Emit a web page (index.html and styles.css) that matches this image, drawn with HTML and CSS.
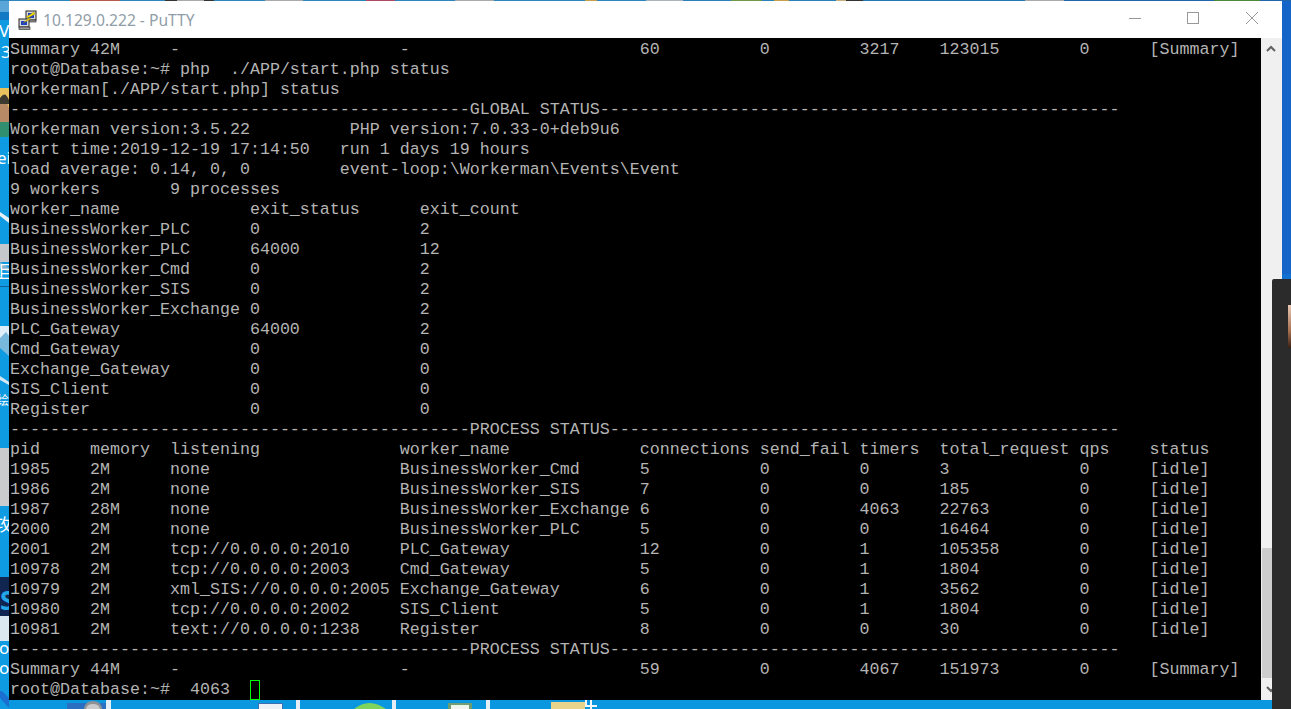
FILE: index.html
```html
<!DOCTYPE html>
<html lang="en">
<head>
<meta charset="utf-8">
<title>10.129.0.222 - PuTTY</title>
<link rel="stylesheet" href="styles.css">
</head>
<body>
<div class="desktop">
  <svg class="wallpaper" width="1291" height="709" viewBox="0 0 1291 709">
    <rect x="0" y="0" width="9" height="709" fill="#0f9be2"/>
    <rect x="0" y="0" width="9" height="12" fill="#5aa6d8"/>
    <rect x="0" y="12" width="9" height="8" fill="#1279c4"/>
    <text x="-1" y="37" class="frag">Vi</text>
    <text x="1" y="58" class="frag">3</text>
    <rect x="0" y="88" width="9" height="42" fill="#e8c25e"/>
    <path d="M0 112 Q4 108 9 118 V137 H0Z" fill="#2f8f6f"/>
    <path d="M0 100 Q6 98 9 108 V122 H0Z" fill="#b98a66"/>
    <path d="M0 98 Q5 90 9 100 V104 H0Z" fill="#3c3a30"/>
    <text x="-3" y="164" class="frag">ei</text>
    <path d="M0 212 L9 218 V223 L0 216Z" fill="#e6f2fa"/>
    <rect x="0" y="244" width="9" height="18" fill="#c4c8cc"/>
    <path d="M0 262 L9 268 V272 L0 268Z" fill="#7fb0d0"/>
    <text x="-3" y="278" class="frag">且</text>
    <rect x="0" y="286" width="9" height="1" fill="#0d5e9a"/>
    <path d="M0 326 H9 V356 L0 348Z" fill="#78b8dc"/>
    <path d="M0 338 L6 332 L9 336 V326 H0Z" fill="#dfeef8"/>
    <path d="M0 376 L9 382 V385 L0 380Z" fill="#d7e8f3"/>
    <text x="-3" y="405" class="frag small">绘</text>
    <rect x="0" y="448" width="9" height="58" fill="#c9cbcc"/>
    <text x="-5" y="531" class="frag">攻</text>
    <rect x="0" y="577" width="9" height="39" fill="#10254f"/>
    <text x="0" y="610" class="frag cyan">S</text>
    <rect x="0" y="616" width="9" height="25" fill="#dce8f0"/>
    <text x="-1" y="654" class="frag">o</text>
    <text x="-1" y="674" class="frag">o</text>
    <path d="M0 691 L2 691 L20 709 H10 L0 698Z" fill="#1a6fd0"/>

    <rect x="9" y="700" width="1263" height="9" fill="#0b97e0"/>
    <path d="M67 703 H110 V709 H67Z" fill="#2a6fc0"/>
    <path d="M84 709 Q85 701 93 701 Q101 701 102 709Z" fill="#8f9294"/>
    <path d="M86 709 Q87 704 93 704 Q99 704 100 709Z" fill="#c9cbcd"/>
    <rect x="106" y="700" width="5" height="9" fill="#e6eef5"/>
    <path d="M258 703 H283 V709 H258Z" fill="#3d6fb0"/>
    <rect x="259" y="704" width="23" height="5" fill="#eef2f6"/>
    <rect x="296" y="700" width="4" height="9" fill="#e6eef5"/>
    <path d="M354 709 Q369 697 386 709Z" fill="#7ed45c"/>
    <rect x="392" y="700" width="4" height="9" fill="#e6eef5"/>
    <rect x="448" y="703" width="24" height="6" fill="#6f9d70"/>
    <rect x="451" y="705" width="18" height="4" fill="#eef5ee"/>
    <rect x="486" y="700" width="4" height="9" fill="#e6eef5"/>
    <rect x="551" y="702" width="34" height="7" fill="#e9d48c"/>
    <path d="M586 700 V706 H597 M591 700 V709" stroke="#f4f8fb" stroke-width="2" fill="none"/>

    <rect x="1282" y="0" width="9" height="279" fill="#1565c8"/>
    <rect x="1282" y="274" width="9" height="5" fill="#1270d0"/>
  </svg>
  <div class="topedge"></div>

  <section class="window">
    <header class="titlebar">
      <svg class="appicon" width="20" height="20" viewBox="0 0 20 20">
        <rect x="8" y="1" width="10" height="9" fill="#d8d8d8" stroke="#222"/>
        <rect x="10" y="3" width="6" height="5" fill="#2040c0"/>
        <rect x="9" y="10" width="9" height="2" fill="#999" stroke="#222" stroke-width=".6"/>
        <rect x="1" y="9" width="10" height="8" fill="#d8d8d8" stroke="#222"/>
        <rect x="3" y="11" width="6" height="4" fill="#2040c0"/>
        <rect x="1" y="17" width="11" height="2.4" fill="#999" stroke="#222" stroke-width=".6"/>
        <path d="M16 2 L8 7 L11 8 L5 13 L13 9 L10 8 L17 4Z" fill="#f6e000" stroke="#8a7a00" stroke-width=".4"/>
      </svg>
      <h1 class="title">10.129.0.222 - PuTTY</h1>
      <div class="controls">
        <span class="ctl"><svg width="14" height="14" viewBox="0 0 14 14"><path d="M1 7.5 H13" stroke="#999" fill="none"/></svg></span>
        <span class="ctl"><svg width="14" height="14" viewBox="0 0 14 14"><rect x="1.5" y="1.5" width="11" height="11" stroke="#999" fill="none"/></svg></span>
        <span class="ctl"><svg width="14" height="14" viewBox="0 0 14 14"><path d="M1 1 L13 13 M13 1 L1 13" stroke="#999" fill="none"/></svg></span>
      </div>
    </header>
    <div class="client">
<pre class="term">Summary 42M     -                      -                       60          0         3217    123015        0      [Summary]
root@Database:~# php  ./APP/start.php status
Workerman[./APP/start.php] status
----------------------------------------------GLOBAL STATUS----------------------------------------------------
Workerman version:3.5.22          PHP version:7.0.33-0+deb9u6
start time:2019-12-19 17:14:50   run 1 days 19 hours
load average: 0.14, 0, 0         event-loop:\Workerman\Events\Event
9 workers       9 processes
worker_name             exit_status      exit_count
BusinessWorker_PLC      0                2
BusinessWorker_PLC      64000            12
BusinessWorker_Cmd      0                2
BusinessWorker_SIS      0                2
BusinessWorker_Exchange 0                2
PLC_Gateway             64000            2
Cmd_Gateway             0                0
Exchange_Gateway        0                0
SIS_Client              0                0
Register                0                0
----------------------------------------------PROCESS STATUS---------------------------------------------------
pid     memory  listening              worker_name             connections send_fail timers  total_request qps    status
1985    2M      none                   BusinessWorker_Cmd      5           0         0       3             0      [idle]
1986    2M      none                   BusinessWorker_SIS      7           0         0       185           0      [idle]
1987    28M     none                   BusinessWorker_Exchange 6           0         4063    22763         0      [idle]
2000    2M      none                   BusinessWorker_PLC      5           0         0       16464         0      [idle]
2001    2M      tcp://0.0.0.0:2010     PLC_Gateway             12          0         1       105358        0      [idle]
10978   2M      tcp://0.0.0.0:2003     Cmd_Gateway             5           0         1       1804          0      [idle]
10979   2M      xml_SIS://0.0.0.0:2005 Exchange_Gateway        6           0         1       3562          0      [idle]
10980   2M      tcp://0.0.0.0:2002     SIS_Client              5           0         1       1804          0      [idle]
10981   2M      text://0.0.0.0:1238    Register                8           0         0       30            0      [idle]
----------------------------------------------PROCESS STATUS---------------------------------------------------
Summary 44M     -                      -                       59          0         4067    151973        0      [Summary]
root@Database:~#  4063  <span class="cursor"> </span></pre>
      <div class="scrollbar">
        <svg class="arrow" width="10" height="8" viewBox="0 0 10 8"><path d="M1 6 L5 2 L9 6" stroke="#606060" stroke-width="2" fill="none"/></svg>
        <div class="track"><div class="thumb"></div></div>
        <svg class="arrow" width="10" height="8" viewBox="0 0 10 8"><path d="M1 2 L5 6 L9 2" stroke="#606060" stroke-width="2" fill="none"/></svg>
      </div>
    </div>
  </section>

  <aside class="otherwindow"><div class="photo"></div></aside>
</div>
</body>
</html>
```
FILE: styles.css
```css
* { box-sizing: border-box; }
html, body { margin: 0; padding: 0; background: #0f9be2; }
body { width: 1291px; height: 709px; overflow: hidden; }

.desktop { position: relative; width: 1291px; height: 709px; overflow: hidden; }
.wallpaper { position: absolute; left: 0; top: 0; display: block; }
.frag { font-family: "Noto Sans", "Noto Sans CJK SC", sans-serif; font-size: 17px; fill: #fff; }
.frag.small { font-size: 12px; }
.frag.cyan { font-weight: 700; font-size: 26px; fill: #23a6e8; }

.topedge {
  position: absolute; left: 0; top: 0; width: 1291px; height: 1px;
  background: linear-gradient(90deg,
    #2a86bd 0 70px, #b9584f 70px 120px, #2a86bd 120px 165px, #333 165px 177px, #aaa 177px 204px,
    #333 204px 214px, #2a86bd 214px 265px, #aaa 265px 303px, #2a86bd 303px 366px, #b04a60 366px 395px,
    #2a86bd 395px 455px, #aaa 455px 494px, #2a86bd 494px 585px, #c9a04a 585px 597px, #2a86bd 597px 646px,
    #a9b4bd 646px 683px, #2a80b8 683px 731px, #6f9a4a 731px 762px, #2a80b8 762px 774px, #c9a04a 774px 789px,
    #2a80b8 789px 836px, #c9b080 836px 846px, #333 846px 863px, #2277b5 863px 1025px, #aaa 1025px 1064px,
    #1f66ad 1064px 1214px, #4f8a3c 1214px 1260px, #1f66ad 1260px);
}

.window {
  position: absolute; left: 9px; top: 1px; width: 1273px; height: 699px;
  display: flex; flex-direction: column; background: #fff;
}
.titlebar { height: 37px; flex: none; display: flex; align-items: center; background: #fff; }
.appicon { flex: none; margin: 0 0 0 9px; }
.title {
  margin: 0 0 0 5px; font-family: "Noto Sans", sans-serif; font-weight: 400; font-size: 15.6px;
  color: #8f9da8; flex: 1;
}
.controls { display: flex; align-self: stretch; gap: 45px; margin-right: 23px; }
.ctl { width: 14px; display: flex; align-items: center; justify-content: center; padding-bottom: 3px; }
.ctl:first-child { margin-right: -1px; }

.client { flex: 1; display: flex; min-height: 0; }
.term {
  flex: 1; margin: 0; padding: 2px 0 0 1px; background: #000; color: #b4b4b4;
  font-family: "Liberation Mono", "Courier New", monospace; font-size: 16.665px; line-height: 20px;
  white-space: pre; overflow: hidden;
}
.cursor { display: inline-block; width: 10px; height: 20px; border: 1px solid #00ff00; vertical-align: top; }

.scrollbar {
  flex: none; width: 21px; background: #f0f0f0; display: flex; flex-direction: column; align-items: flex-start;
}
.arrow { flex: none; margin: 7px 0 7px 5px; }
.track { flex: 1; width: 100%; display: flex; flex-direction: column; justify-content: flex-end; padding: 0 0 0 1px; }
.thumb { height: 130px; width: 19px; background: #cdcdcd; }

.otherwindow {
  position: absolute; left: 1272px; top: 279px; width: 19px; height: 430px;
  background: #2b2b2b; border-top-left-radius: 2px; padding: 26px 0 0 16px;
}
.photo { width: 3px; height: 43px; background: linear-gradient(180deg, #e8c8b4, #a87050 60%, #3a2014); }
```
